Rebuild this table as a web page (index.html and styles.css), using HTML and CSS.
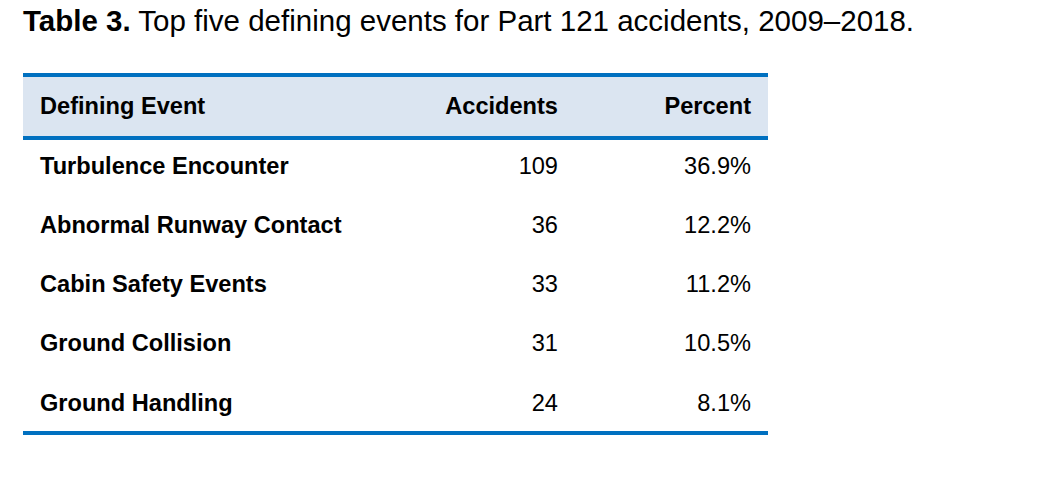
FILE: index.html
```html
<!DOCTYPE html>
<html lang="en">
<head>
<meta charset="utf-8">
<title>Table 3</title>
<link rel="stylesheet" href="styles.css">
</head>
<body>
<main class="page">
  <h1 class="caption"><span class="caption-label">Table 3.</span> Top five defining events for Part 121 accidents, 2009–2018.</h1>
  <div class="data" role="table">
    <div class="row row-head" role="row">
      <div class="cell cell-event" role="columnheader">Defining Event</div>
      <div class="cell cell-num" role="columnheader">Accidents</div>
      <div class="cell cell-num" role="columnheader">Percent</div>
    </div>
    <div class="row row-body" role="row">
      <div class="cell cell-event" role="cell">Turbulence Encounter</div>
      <div class="cell cell-num" role="cell">109</div>
      <div class="cell cell-num" role="cell">36.9%</div>
    </div>
    <div class="row row-body" role="row">
      <div class="cell cell-event" role="cell">Abnormal Runway Contact</div>
      <div class="cell cell-num" role="cell">36</div>
      <div class="cell cell-num" role="cell">12.2%</div>
    </div>
    <div class="row row-body" role="row">
      <div class="cell cell-event" role="cell">Cabin Safety Events</div>
      <div class="cell cell-num" role="cell">33</div>
      <div class="cell cell-num" role="cell">11.2%</div>
    </div>
    <div class="row row-body" role="row">
      <div class="cell cell-event" role="cell">Ground Collision</div>
      <div class="cell cell-num" role="cell">31</div>
      <div class="cell cell-num" role="cell">10.5%</div>
    </div>
    <div class="row row-body row-last" role="row">
      <div class="cell cell-event" role="cell">Ground Handling</div>
      <div class="cell cell-num" role="cell">24</div>
      <div class="cell cell-num" role="cell">8.1%</div>
    </div>
  </div>
</main>
</body>
</html>
```

FILE: styles.css
```css
html, body {
  margin: 0;
  padding: 0;
  background: #ffffff;
}

body {
  font-family: "Liberation Sans", Arial, sans-serif;
  color: #000000;
}

.page {
  padding: 4px 0 0 23px;
}

.caption {
  margin: 0;
  font-size: 29.5px;
  line-height: 34px;
  font-weight: 400;
}

.caption-label {
  font-weight: 700;
}

.data {
  margin-top: 35px;
  width: 745px;
  font-size: 23.6px;
  line-height: 27px;
}

.row {
  display: grid;
  grid-template-columns: 393px 159px 193px;
  align-items: center;
  box-sizing: border-box;
}

.row-head {
  height: 67px;
  background: #dbe5f1;
  border-top: 4px solid #0070c0;
  border-bottom: 4px solid #0070c0;
  font-weight: 700;
}

.row-body {
  height: 59.25px;
  padding-bottom: 7px;
}

.row-last {
  height: 58.25px;
  padding-bottom: 2px;
  border-bottom: 4px solid #0070c0;
}

.cell {
  padding: 0 17px;
}

.cell-event {
  text-align: left;
  font-weight: 700;
}

.cell-num {
  text-align: right;
}

.row-body .cell-num {
  font-weight: 400;
}
```
